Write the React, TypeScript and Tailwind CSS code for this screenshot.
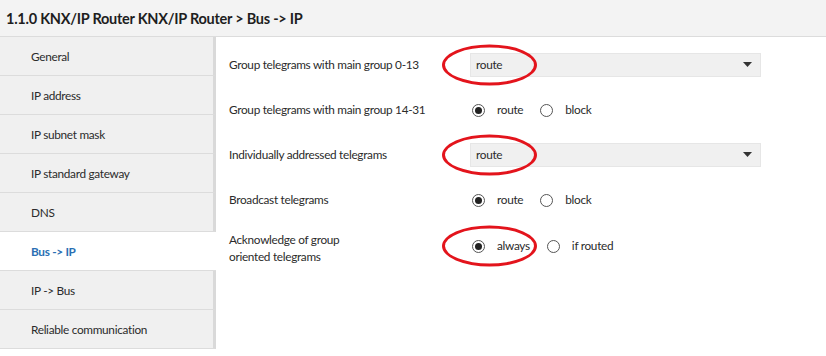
const menu = [
    'General',
    'IP address',
    'IP subnet mask',
    'IP standard gateway',
    'DNS',
    'Bus -> IP',
    'IP -> Bus',
    'Reliable communication',
];

const Mark = () => (
    <div className="pointer-events-none absolute left-[-28px] top-1/2 h-[41px] w-[95px] -translate-y-1/2 rounded-[50%] border-[3px] border-[#e3141c]" />
);

const Radio = ({ checked, label }: { checked?: boolean; label: string }) => (
    <label className="flex items-center">
        <span className="flex h-[13px] w-[13px] items-center justify-center rounded-full border border-[#555] bg-white">
            {checked && <span className="h-[7px] w-[7px] rounded-full bg-[#222]" />}
        </span>
        <span className="ml-[12px]">{label}</span>
    </label>
);

const Select = ({ value }: { value: string }) => (
    <div className="flex h-[24px] w-[291px] items-center justify-between border border-[#e6e6e6] bg-[#f0f0f0] pl-[5px] pr-[8px]">
        <span>{value}</span>
        <svg width="9" height="5" viewBox="0 0 9 5">
            <path d="M0 0h9L4.5 5z" fill="#333" />
        </svg>
    </div>
);

const App = () => {
    return (
        <div className="h-[356px] w-[826px] overflow-hidden bg-white text-[11.8px] tracking-[-0.3px] text-[#2b2b2b] [font-family:Lato,'Noto_Sans',sans-serif]">
            {/* Title bar */}
            <div className="flex h-[37px] items-center border-b border-[#dcdcdc] bg-[#f3f3f3] pl-[6px] pt-[1px] text-[14.5px] font-bold tracking-[-0.25px] text-[#1e1e1e]">
                1.1.0 KNX/IP Router KNX/IP Router &gt; Bus -&gt; IP
            </div>

            <div className="flex">
                {/* Side menu */}
                <div className="flex w-[216px] flex-col">
                    {menu.map((item) => {
                        const active = item === 'Bus -> IP';
                        return (
                            <div
                                key={item}
                                className={
                                    active
                                        ? 'flex h-[39px] items-center border-b border-[#dcdcdc] bg-white pl-[31px] pt-[2px] font-bold text-[#2a6fb3]'
                                        : 'flex h-[39px] items-center border-b border-r-[3px] border-[#dcdcdc] border-r-[#d9d9d9] bg-[#f0f0f0] pl-[31px] pt-[2px]'
                                }
                            >
                                {item}
                            </div>
                        );
                    })}
                </div>

                {/* Parameters */}
                <div className="flex flex-1 flex-col pl-[13px] pt-[5px]">
                    <div className="flex h-[45px] items-center">
                        <div className="w-[241px]">Group telegrams with main group 0-13</div>
                        <div className="relative">
                            <Select value="route" />
                            <Mark />
                        </div>
                    </div>

                    <div className="flex h-[45px] items-center pt-[1px]">
                        <div className="w-[241px]">Group telegrams with main group 14-31</div>
                        <div className="flex items-center gap-[17px] pl-[2px]">
                            <Radio checked label="route" />
                            <Radio label="block" />
                        </div>
                    </div>

                    <div className="flex h-[45px] items-center">
                        <div className="w-[241px]">Individually addressed telegrams</div>
                        <div className="relative">
                            <Select value="route" />
                            <Mark />
                        </div>
                    </div>

                    <div className="flex h-[45px] items-center pt-[1px]">
                        <div className="w-[241px]">Broadcast telegrams</div>
                        <div className="flex items-center gap-[17px] pl-[2px]">
                            <Radio checked label="route" />
                            <Radio label="block" />
                        </div>
                    </div>

                    <div className="flex h-[47px] items-center pt-[1px]">
                        <div className="w-[241px] pt-[3px] leading-[17px]">
                            Acknowledge of group
                            <br />
                            oriented telegrams
                        </div>
                        <div className="relative flex items-center gap-[17px] pl-[2px]">
                            <Radio checked label="always" />
                            <Radio label="if routed" />
                            <Mark />
                        </div>
                    </div>
                </div>
            </div>
        </div>
    );
};

export default App;
